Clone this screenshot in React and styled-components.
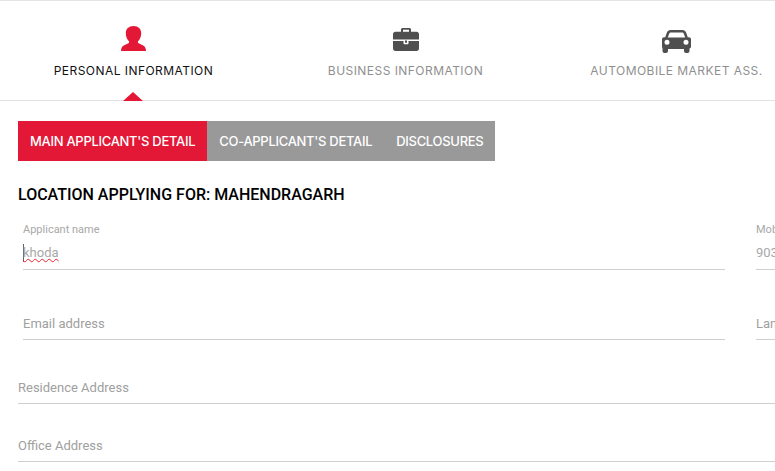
import React from "react";
import styled, { createGlobalStyle } from "styled-components";

const GlobalStyle = createGlobalStyle`
  html, body {
    margin: 0;
    padding: 0;
    background: #ffffff;
    overflow: hidden;
  }
`;

const PersonIcon = () => (
  <Glyph width="25" height="25" viewBox="0 0 26 26" $top={0}>
    <path
      fill="currentColor"
      d="M13 0c5 0 8 3 8 7.500 0 3.500-1.300 6.300-3 8-.7.800-.6 1.900.3 2.400 2 1.100 4.700 2 6.200 3.400 1 1 1.500 3.200 1.500 4.700H0c0-1.500.5-3.700 1.500-4.700 1.500-1.400 4.200-2.300 6.200-3.400.9-.5 1-1.600.3-2.400-1.700-1.700-3-4.500-3-8C5 3 8 0 13 0z"
    />
  </Glyph>
);

const BriefcaseIcon = () => (
  <Glyph width="26" height="23" viewBox="0 0 26 24" preserveAspectRatio="none" $top={2}>
    <path
      fill="currentColor"
      d="M8 4V1.500C8 .7 8.700 0 9.500 0h7C17.300 0 18 .7 18 1.500V4h5.500C25 4 26 5 26 6.500V12H0V6.500C0 5 1 4 2.500 4H8zm2-2.200V4h6V1.800h-6zM0 13.500h10.500V16c0 .6.400 1 1 1h3c.6 0 1-.4 1-1v-2.500H26v8C26 23 25 24 23.500 24h-21C1 24 0 23 0 21.500v-8zm12-0.500h2v2.500h-2V13z"
    />
  </Glyph>
);

const CarIcon = () => (
  <Glyph width="29" height="23" viewBox="0 0 29 23" $top={4}>
    <path
      fill="currentColor"
      fillRule="evenodd"
      d="M8.500 0h12c1.800 0 3 1 3.600 2.600l1.700 4.700 1.200-.1c1.100 0 2 .9 2 1.900v7.400c0 1-.6 1.800-1.500 2.100v2.400c0 1.100-.9 2-2 2h-1.500c-1.100 0-2-.9-2-2v-2H6v2c0 1.100-.9 2-2 2H2.500c-1.100 0-2-.9-2-2v-2.400C.6 18.300 0 17.500 0 16.500V9.100c0-1 .9-1.900 2-1.900l1.200.1 1.700-4.700C5.500 1 6.700 0 8.500 0zM9 2.400c-.9 0-1.500.4-1.800 1.300L5.800 7.500h17.400l-1.400-3.800c-.3-.9-.9-1.300-1.800-1.300H9zM5 9.800a2.500 2.500 0 1 0 0 5 2.500 2.500 0 0 0 0-5zm19 0a2.500 2.500 0 1 0 0 5 2.500 2.500 0 0 0 0-5z"
    />
  </Glyph>
);

const steps = [
  { label: "PERSONAL INFORMATION", icon: <PersonIcon />, active: true },
  { label: "BUSINESS INFORMATION", icon: <BriefcaseIcon /> },
  { label: "AUTOMOBILE MARKET ASS.", icon: <CarIcon /> },
];

const tabs = [
  { label: "MAIN APPLICANT'S DETAIL", active: true },
  { label: "CO-APPLICANT'S DETAIL" },
  { label: "DISCLOSURES" },
];

const App = () => (
  <Page>
    <GlobalStyle />
    <StepBar>
      {steps.map((step) => (
        <Step key={step.label} $active={step.active}>
          <StepIcon>{step.icon}</StepIcon>
          <StepLabel $active={step.active}>{step.label}</StepLabel>
        </Step>
      ))}
    </StepBar>

    <Content>
      <Tabs>
        {tabs.map((tab) => (
          <Tab key={tab.label} $active={tab.active}>
            {tab.label}
          </Tab>
        ))}
      </Tabs>

      <Title>LOCATION APPLYING FOR: MAHENDRAGARH</Title>

      <FieldRow>
        <Field>
          <FloatLabel>Applicant name</FloatLabel>
          <Value>
            <Typed>khoda</Typed>
          </Value>
        </Field>
        <Field>
          <FloatLabel>Mobile number</FloatLabel>
          <Value>9034567890</Value>
        </Field>
      </FieldRow>

      <FieldRow>
        <Field>
          <Placeholder>Email address</Placeholder>
        </Field>
        <Field>
          <Placeholder>Landline number</Placeholder>
        </Field>
      </FieldRow>

      <WideField>
        <Placeholder>Residence Address</Placeholder>
      </WideField>
      <WideField>
        <Placeholder>Office Address</Placeholder>
      </WideField>
    </Content>
  </Page>
);

export default App;

const Page = styled.div`
  width: 775px;
  height: 471px;
  overflow: hidden;
  border-top: 1px solid #e4e4e4;
  box-sizing: border-box;
  background: #ffffff;
`;

const StepBar = styled.div`
  display: grid;
  grid-template-columns: 272px 272px 270px;
  height: 99px;
  margin-left: -2.5px;
  border-bottom: 1px solid #e2e2e2;
  width: 778px;
`;

const Step = styled.div`
  position: relative;
  display: flex;
  flex-direction: column;
  align-items: center;
  color: ${(p) => (p.$active ? "#e31837" : "#4f4f4f")};

  ${(p) =>
    p.$active &&
    `
    &::after {
      content: "";
      position: absolute;
      left: 125.5px;
      bottom: -1px;
      border-left: 10px solid transparent;
      border-right: 10px solid transparent;
      border-bottom: 9px solid #e31837;
    }
  `}
`;

const StepIcon = styled.div`
  height: 26px;
  margin-top: 25px;
  display: flex;
  align-items: flex-start;
  overflow: visible;
`;

const Glyph = styled.svg`
  display: block;
  flex: none;
  margin-top: ${(p) => p.$top}px;
`;

const StepLabel = styled.div`
  margin-top: 11px;
  font-family: "Inter", "Liberation Sans", sans-serif;
  font-size: 12px;
  line-height: 16px;
  letter-spacing: 0.45px;
  white-space: nowrap;
  color: ${(p) => (p.$active ? "#111111" : "#8f8f8f")};
`;

const Content = styled.div`
  padding: 20px 0 0 18px;
`;

const Tabs = styled.div`
  display: flex;
  height: 40px;
`;

const Tab = styled.div`
  display: flex;
  align-items: center;
  padding: 0 12px;
  font-family: "Inter", "Liberation Sans", sans-serif;
  font-size: 13px;
  font-weight: 500;
  letter-spacing: -0.3px;
  white-space: nowrap;
  color: #ffffff;
  background: ${(p) => (p.$active ? "#e31837" : "#999999")};
`;

const Title = styled.h2`
  margin: 24px 0 0;
  font-family: "Roboto", "Liberation Sans", sans-serif;
  font-size: 16px;
  font-weight: 500;
  line-height: 19px;
  color: #000000;
`;

const FieldRow = styled.div`
  display: grid;
  grid-template-columns: 702px 702px;
  column-gap: 31px;
  margin-top: 19px;
  padding-left: 5px;

  & + & {
    margin-top: 44px;
  }
`;

const Field = styled.div`
  display: flex;
  flex-direction: column;
  padding-bottom: 6px;
  border-bottom: 1px solid #cfcfcf;
  font-family: "Roboto", "Liberation Sans", sans-serif;
`;

const FloatLabel = styled.label`
  font-size: 11px;
  line-height: 13px;
  color: #a8a8a8;
  margin-bottom: 7px;
`;

const Value = styled.div`
  font-size: 13px;
  line-height: 20px;
  height: 20px;
  color: #a8a8a8;
`;

const Typed = styled.span`
  display: inline-block;
  line-height: 18px;
  box-shadow: inset 1px 0 0 #666666;
  text-decoration: underline wavy #ee2030 1px;
  text-underline-offset: 1px;
`;

const Placeholder = styled.div`
  font-size: 13px;
  line-height: 20px;
  margin-bottom: -1px;
  color: #a0a0a0;
`;

const WideField = styled.div`
  box-sizing: border-box;
  height: 58px;
  margin-top: 6px;
  padding-top: 32px;
  border-bottom: 1px solid #cfcfcf;
  font-family: "Roboto", "Liberation Sans", sans-serif;

  & + & {
    margin-top: 0;
  }
`;
